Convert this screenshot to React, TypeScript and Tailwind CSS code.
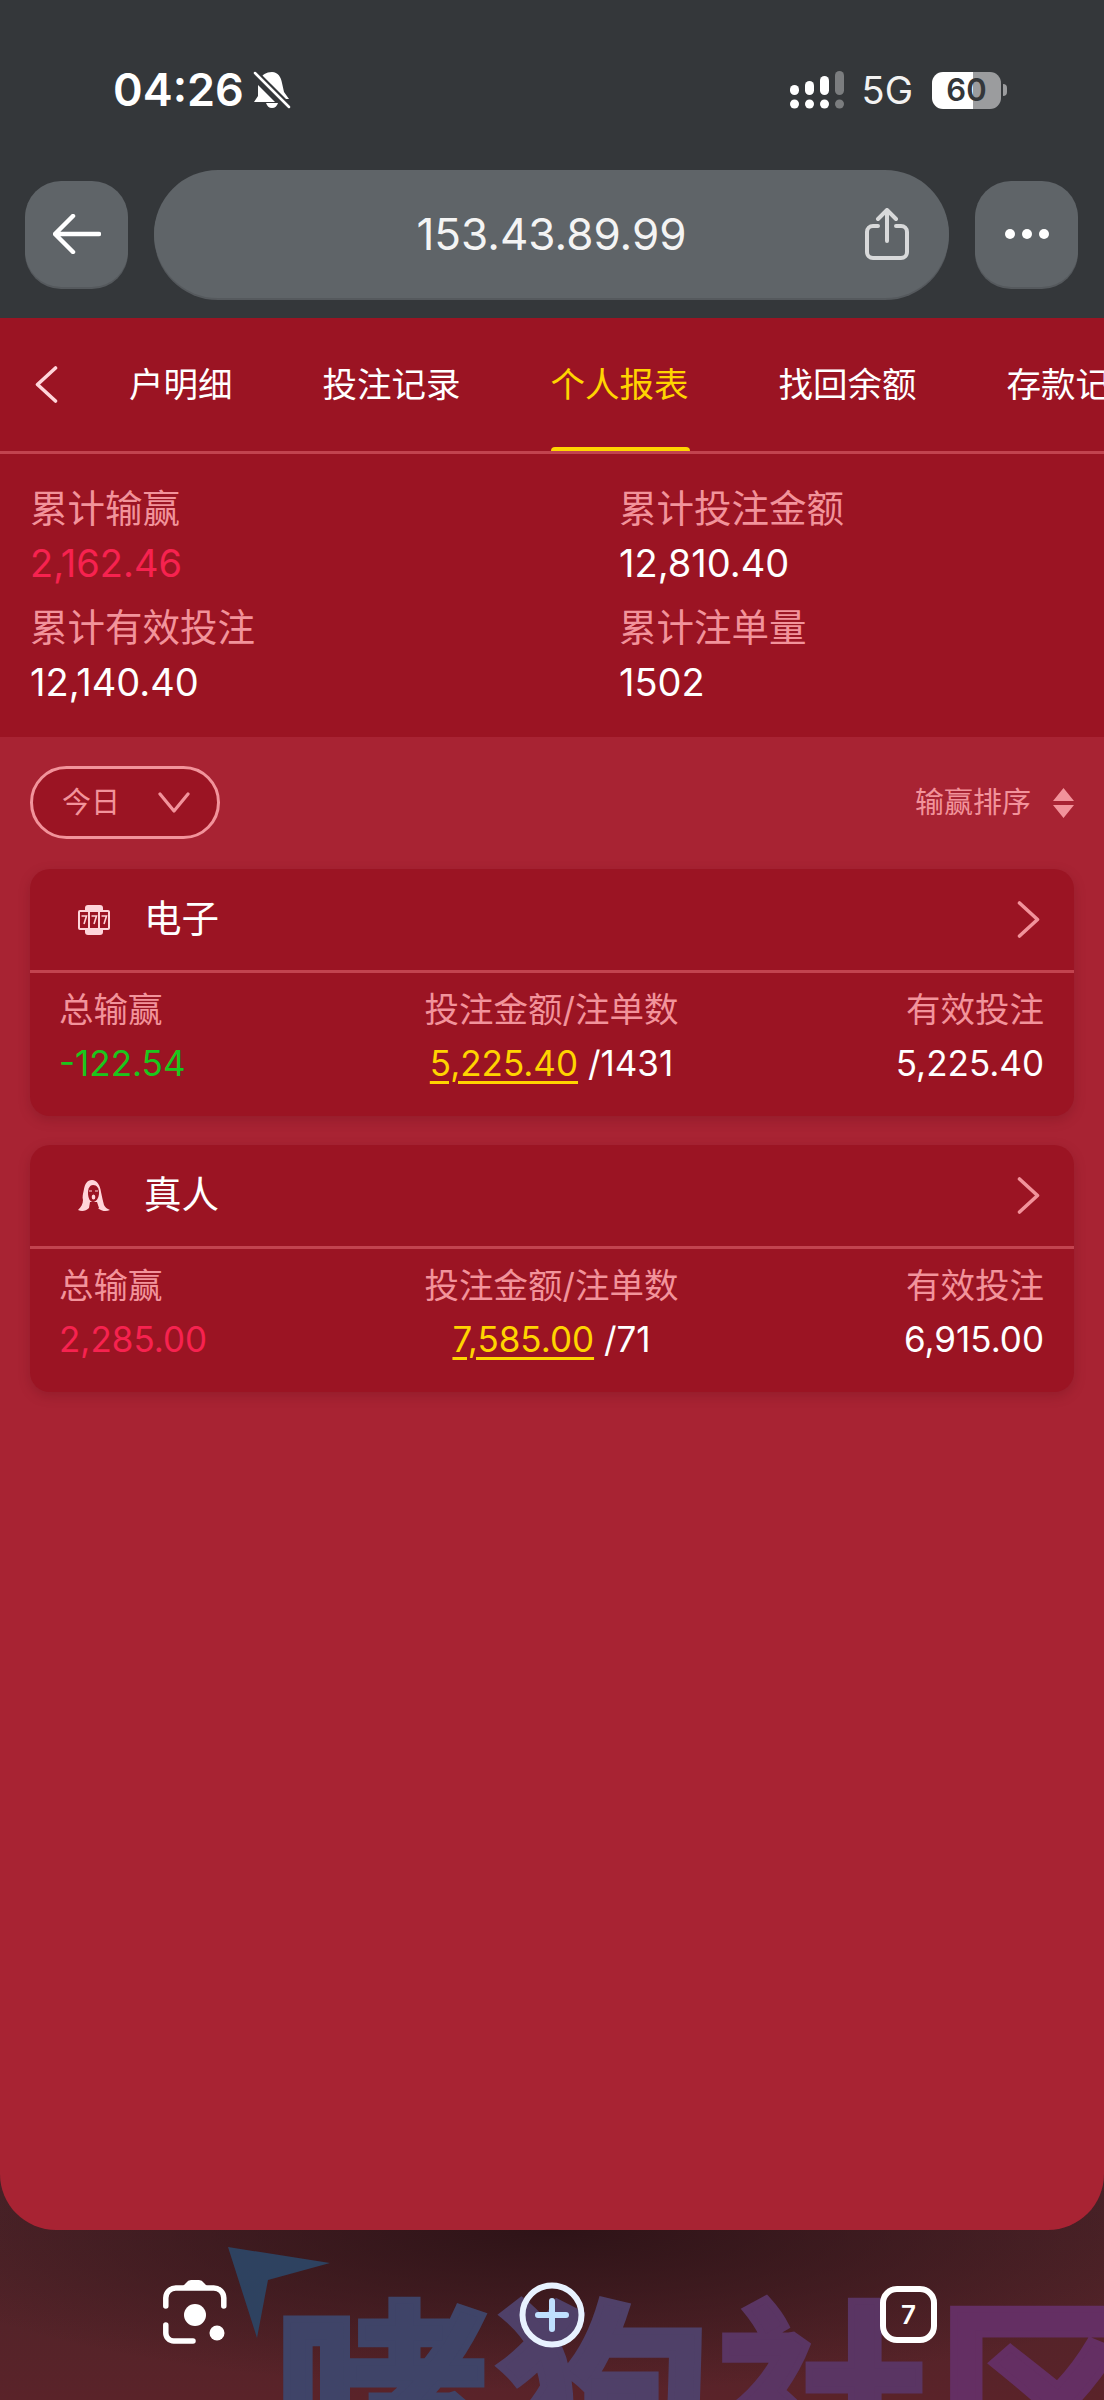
const sans = "font-['Inter','Noto_Sans_CJK_SC',sans-serif]";

function Signal() {
  return (
    <svg width="54" height="38" viewBox="0 0 54 38" fill="#fff">
      <rect x="0" y="14" width="9" height="10" rx="4.5" />
      <rect x="15" y="10" width="9" height="14" rx="4.5" />
      <rect x="30" y="5" width="9" height="19" rx="4.5" />
      <rect x="45" y="0" width="9" height="24" rx="4.5" fill="#7b7d7f" />
      <circle cx="4.5" cy="33" r="4.5" />
      <circle cx="19.5" cy="33" r="4.5" />
      <circle cx="34.5" cy="33" r="4.5" />
      <circle cx="49.5" cy="33" r="4.5" fill="#7b7d7f" />
    </svg>
  );
}

function BellOff() {
  return (
    <svg width="38" height="38" viewBox="0 0 38 38" fill="#fff">
      <path d="M19 1c6 0 9 5 10 11l2 9 5 7H26L7 8c2-4 6-7 12-7zM5 14l17 17H1l4-6z" />
      <path d="M13 32h12c-1 3-3 5-6 5s-5-2-6-5z" />
      <path d="M2 2l34 34" stroke="#34373a" strokeWidth="7" />
      <path d="M2 2l34 34" stroke="#fff" strokeWidth="2.5" strokeLinecap="round" />
    </svg>
  );
}

function SlotIcon() {
  return (
    <svg width="32" height="30" viewBox="0 0 32 30">
      <rect x="7" y="0" width="18" height="30" rx="3" fill="#ffd5da" />
      <rect x="0" y="5" width="32" height="20" rx="2" fill="#ffd5da" />
      <rect x="2" y="7" width="8" height="16" fill="#9b1423" />
      <rect x="12" y="7" width="8" height="16" fill="#9b1423" />
      <rect x="22" y="7" width="8" height="16" fill="#9b1423" />
      <path d="M3.5 11h5l-2.5 8M13.5 11h5l-2.5 8M23.5 11h5l-2.5 8" stroke="#ffd5da" strokeWidth="1.6" fill="none" />
    </svg>
  );
}

function LadyIcon() {
  return (
    <svg width="32" height="32" viewBox="0 0 32 32">
      <path d="M14 0C9 0 7 4 6 9c-1 5-2 8-1 11 0 4-2 7-5 10 4 2 8 1 11-2l2-1h6l2 2c3 2 7 3 11 1-3-1-5-3-6-5-1-4-2-8-3-13C22 5 19 0 14 0z" fill="#ffd5da" />
      <path d="M15 5c4 0 6 3 6 8 0 5-3 9-6 9s-5-4-5-9c0-5 2-8 5-8z" fill="#9b1423" />
      <path d="M11 11h3M17 11h3" stroke="#ffd5da" strokeWidth="1.2" />
      <ellipse cx="15.5" cy="17" rx="1.8" ry="2.6" fill="#ffd5da" />
      <path d="M12 22h7l2 6-5 1-5-1z" fill="#9b1423" />
    </svg>
  );
}

function Chevron({ dir, color }: { dir: "left" | "right"; color: string }) {
  return (
    <svg width="23" height="37" viewBox="0 0 23 37" fill="none" stroke={color} strokeWidth="3.6" strokeLinecap="round" strokeLinejoin="round">
      <path d={dir === "left" ? "M20.5 2 2.5 18.5l18 16.5" : "M2.5 2l18 16.5L2.5 35"} />
    </svg>
  );
}

const tabs = ["户明细", "投注记录", "个人报表", "找回余额", "存款记录"];

const stats = [
  { label: "累计输赢", value: "2,162.46", color: "text-[#f7224f]" },
  { label: "累计投注金额", value: "12,810.40", color: "text-white" },
  { label: "累计有效投注", value: "12,140.40", color: "text-white" },
  { label: "累计注单量", value: "1502", color: "text-white" },
];

const games = [
  { name: "电子", icon: <SlotIcon />, win: "-122.54", winColor: "text-[#1ac71c]", amount: "5,225.40", count: "/1431", valid: "5,225.40" },
  { name: "真人", icon: <LadyIcon />, win: "2,285.00", winColor: "text-[#f7224f]", amount: "7,585.00", count: "/71", valid: "6,915.00" },
];

export default function App() {
  return (
    <div className={`relative h-[2400px] w-[1104px] overflow-hidden bg-[#34373a] ${sans}`}>
      {/* status bar */}
      <div className="flex h-[170px] items-start justify-between pl-[113px] pr-[97px] pt-[62px]">
        <div className="flex items-center gap-[9px] text-[45px] leading-[56px] font-semibold text-white">
          <span>04:26</span>
          <BellOff />
        </div>
        <div className="flex items-center pt-[8px]">
          <Signal />
          <span className="ml-[18px] text-[38px] leading-[40px] text-[#f2f2f2]">5G</span>
          <div className="ml-[19px] flex h-[37px] w-[69px] items-center justify-center rounded-[11px] bg-[linear-gradient(90deg,#fff_0,#fff_59%,#9b9c9e_59%)] text-[31px] font-semibold text-[#34373a]">
            60
          </div>
          <div className="ml-[2px] h-[12px] w-[4px] rounded-r bg-[#9b9c9e]" />
        </div>
      </div>

      {/* browser bar */}
      <div className="flex h-[148px] items-start gap-[26px] pl-[25px] pr-[25px]">
        <button className="mt-[11px] flex h-[106px] w-[103px] items-center justify-center rounded-[36px] bg-[#5f6468] shadow-[0_2px_0_#55595d]">
          <svg width="48" height="40" viewBox="0 0 48 40" fill="none" stroke="#fff" strokeWidth="4.5" strokeLinecap="round" strokeLinejoin="round">
            <path d="M20 2 2 20l18 18M3 20h43" />
          </svg>
        </button>
        <div className="relative flex h-[128px] w-[795px] items-center justify-center rounded-[64px] bg-[#5f6468] text-[44px] font-normal text-[#f4f4f4] shadow-[0_2px_0_#55595d]">
          153.43.89.99
          <svg className="absolute left-[710px] top-[38px]" width="46" height="54" viewBox="0 0 46 54" fill="none" stroke="#d8d9da" strokeWidth="4" strokeLinecap="round" strokeLinejoin="round">
            <path d="M14 18H9a6 6 0 0 0-6 6v20a6 6 0 0 0 6 6h28a6 6 0 0 0 6-6V24a6 6 0 0 0-6-6h-5M23 33V3M14 11l9-9 9 9" />
          </svg>
        </div>
        <button className="mt-[11px] flex h-[106px] w-[103px] items-center justify-center gap-[7px] rounded-[36px] bg-[#5f6468] shadow-[0_2px_0_#55595d]">
          <span className="size-[10px] rounded-full bg-white" />
          <span className="size-[10px] rounded-full bg-white" />
          <span className="size-[10px] rounded-full bg-white" />
        </button>
      </div>

      {/* toolbar behind page */}
      <div className="absolute left-0 top-[2170px] h-[230px] w-[1104px] overflow-hidden bg-[radial-gradient(ellipse_62%_70%_at_50%_26%,#2e1317_0,#2e131700_100%),linear-gradient(180deg,#4a2429_0,#5a2329_100%)]">
        <svg className="absolute left-[228px] top-[77px]" width="102" height="92" viewBox="0 0 102 92" fill="#2e4260">
          <path d="M0 0 102 16 40 33 29 91z" />
        </svg>
        <div className="absolute left-[276px] top-[100px] flex font-['Noto_Sans_CJK_SC',sans-serif] text-[215px] leading-[240px] font-bold tracking-[5px] whitespace-nowrap">
          <span className="text-[#3f4468] [-webkit-text-stroke:7px_#3f4468]">哮</span>
          <span className="text-[#4f4068] [-webkit-text-stroke:7px_#4f4068]">狗</span>
          <span className="text-[#5a3563] [-webkit-text-stroke:7px_#5a3563]">社</span>
          <span className="text-[#642f63] [-webkit-text-stroke:7px_#642f63]">区</span>
        </div>
        <svg className="absolute left-[163px] top-[110px]" width="64" height="64" viewBox="0 0 64 64" fill="none" stroke="#fff" strokeWidth="5.5" strokeLinecap="round">
          <path d="M2.8 26v-8a10 10 0 0 1 10-10h38a10 10 0 0 1 10 10v8M2.8 45v8a8 8 0 0 0 8 8H30" />
          <path d="M18 8l5-5q2-3 5-3h8q3 0 5 3l5 5z" fill="#fff" stroke="none" />
          <circle cx="32" cy="35" r="11" fill="#fff" stroke="none" />
          <circle cx="54" cy="53" r="7.5" fill="#fff" stroke="none" />
        </svg>
        <svg className="absolute left-[519px] top-[112px]" width="66" height="66" viewBox="0 0 66 66" fill="none">
          <circle cx="33" cy="33" r="29.5" stroke="#e8f2ff" strokeWidth="6" />
          <path d="M33 19v28M19 33h28" stroke="#bfe0ff" strokeWidth="6" strokeLinecap="round" />
        </svg>
        <div className="absolute left-[880px] top-[116px] flex size-[57px] items-center justify-center rounded-[17px] border-[6px] border-white text-[26px] font-semibold text-white">
          7
        </div>
      </div>

      {/* page */}
      <div className="absolute left-0 top-[318px] flex h-[1912px] w-[1104px] flex-col overflow-hidden rounded-b-[56px] bg-[#a82333]">
        <div className="relative flex h-[136px] shrink-0 items-center overflow-hidden border-b-[3px] border-[#c2434f] bg-[#9b1423]">
          <div className="ml-[35px] w-[22px] shrink-0">
            <Chevron dir="left" color="#ffd5da" />
          </div>
          <div className="ml-[72px] flex shrink-0 gap-[90px] text-[34.5px] whitespace-nowrap text-white">
            {tabs.map((t, i) => (
              <span key={t} className={i === 2 ? "text-[#ffd400]" : ""}>{t}</span>
            ))}
          </div>
          <div className="absolute bottom-0 left-[551px] h-[4px] w-[139px] rounded-t-sm bg-[#ffd400]" />
        </div>

        {/* totals */}
        <div className="grid h-[283px] shrink-0 grid-cols-[589px_1fr] content-start gap-y-[11px] bg-[#9b1423] pl-[30px] pt-[30px]">
          {stats.map((s) => (
            <div key={s.label}>
              <div className="text-[37.5px] leading-[50px] text-[#f2939b]">{s.label}</div>
              <div className={`text-[38px] leading-[58px] ${s.color}`}>{s.value}</div>
            </div>
          ))}
        </div>

        <div className="flex flex-col px-[30px] pt-[29px]">
          {/* filters */}
          <div className="flex items-center justify-between">
            <button className="flex h-[73px] w-[190px] items-center justify-between rounded-full border-[3px] border-[#f2939b] bg-[#9b1423] pl-[29px] pr-[27px] text-[29px] text-[#f2939b]">
              今日
              <svg width="32" height="21" viewBox="0 0 32 21" fill="none" stroke="#f2939b" strokeWidth="3.2" strokeLinecap="round" strokeLinejoin="round">
                <path d="M2 2l14 17L30 2" />
              </svg>
            </button>
            <div className="flex items-center gap-[22px] text-[29px] text-[#f2939b]">
              输赢排序
              <svg width="21" height="30" viewBox="0 0 21 30" fill="#f2939b">
                <path d="M10.5 0 21 13H0zM0 17h21L10.5 30z" />
              </svg>
            </div>
          </div>

          {/* game cards */}
          <div className="mt-[30px] flex flex-col gap-[29px]">
            {games.map((g) => (
              <div key={g.name} className="h-[247px] rounded-[20px] bg-[#9b1423] shadow-[0_4px_12px_rgba(90,10,20,0.25)]">
                <div className="flex h-[104px] items-center border-b-[3px] border-[#c2434f] pl-[48px] pr-[34px]">
                  <div className="flex w-[32px] justify-center">{g.icon}</div>
                  <span className="ml-[34px] text-[37.5px] text-white">{g.name}</span>
                  <div className="ml-auto">
                    <Chevron dir="right" color="#f2939b" />
                  </div>
                </div>
                <div className="grid grid-cols-[1fr_auto_1fr] pl-[29px] pr-[30px] pt-[12px] text-[34.5px] leading-[50px] text-[#f2939b]">
                  <div>
                    <div>总输赢</div>
                    <div className={`mt-[3px] text-[35px] ${g.winColor}`}>{g.win}</div>
                  </div>
                  <div className="text-center">
                    <div>投注金额/注单数</div>
                    <div className="mt-[3px] text-[35px] text-white">
                      <span className="text-[#ffd400] underline decoration-[3px] underline-offset-[5px]">{g.amount}</span> {g.count}
                    </div>
                  </div>
                  <div className="text-right">
                    <div>有效投注</div>
                    <div className="mt-[3px] text-[35px] text-white">{g.valid}</div>
                  </div>
                </div>
              </div>
            ))}
          </div>
        </div>
      </div>
    </div>
  );
}
